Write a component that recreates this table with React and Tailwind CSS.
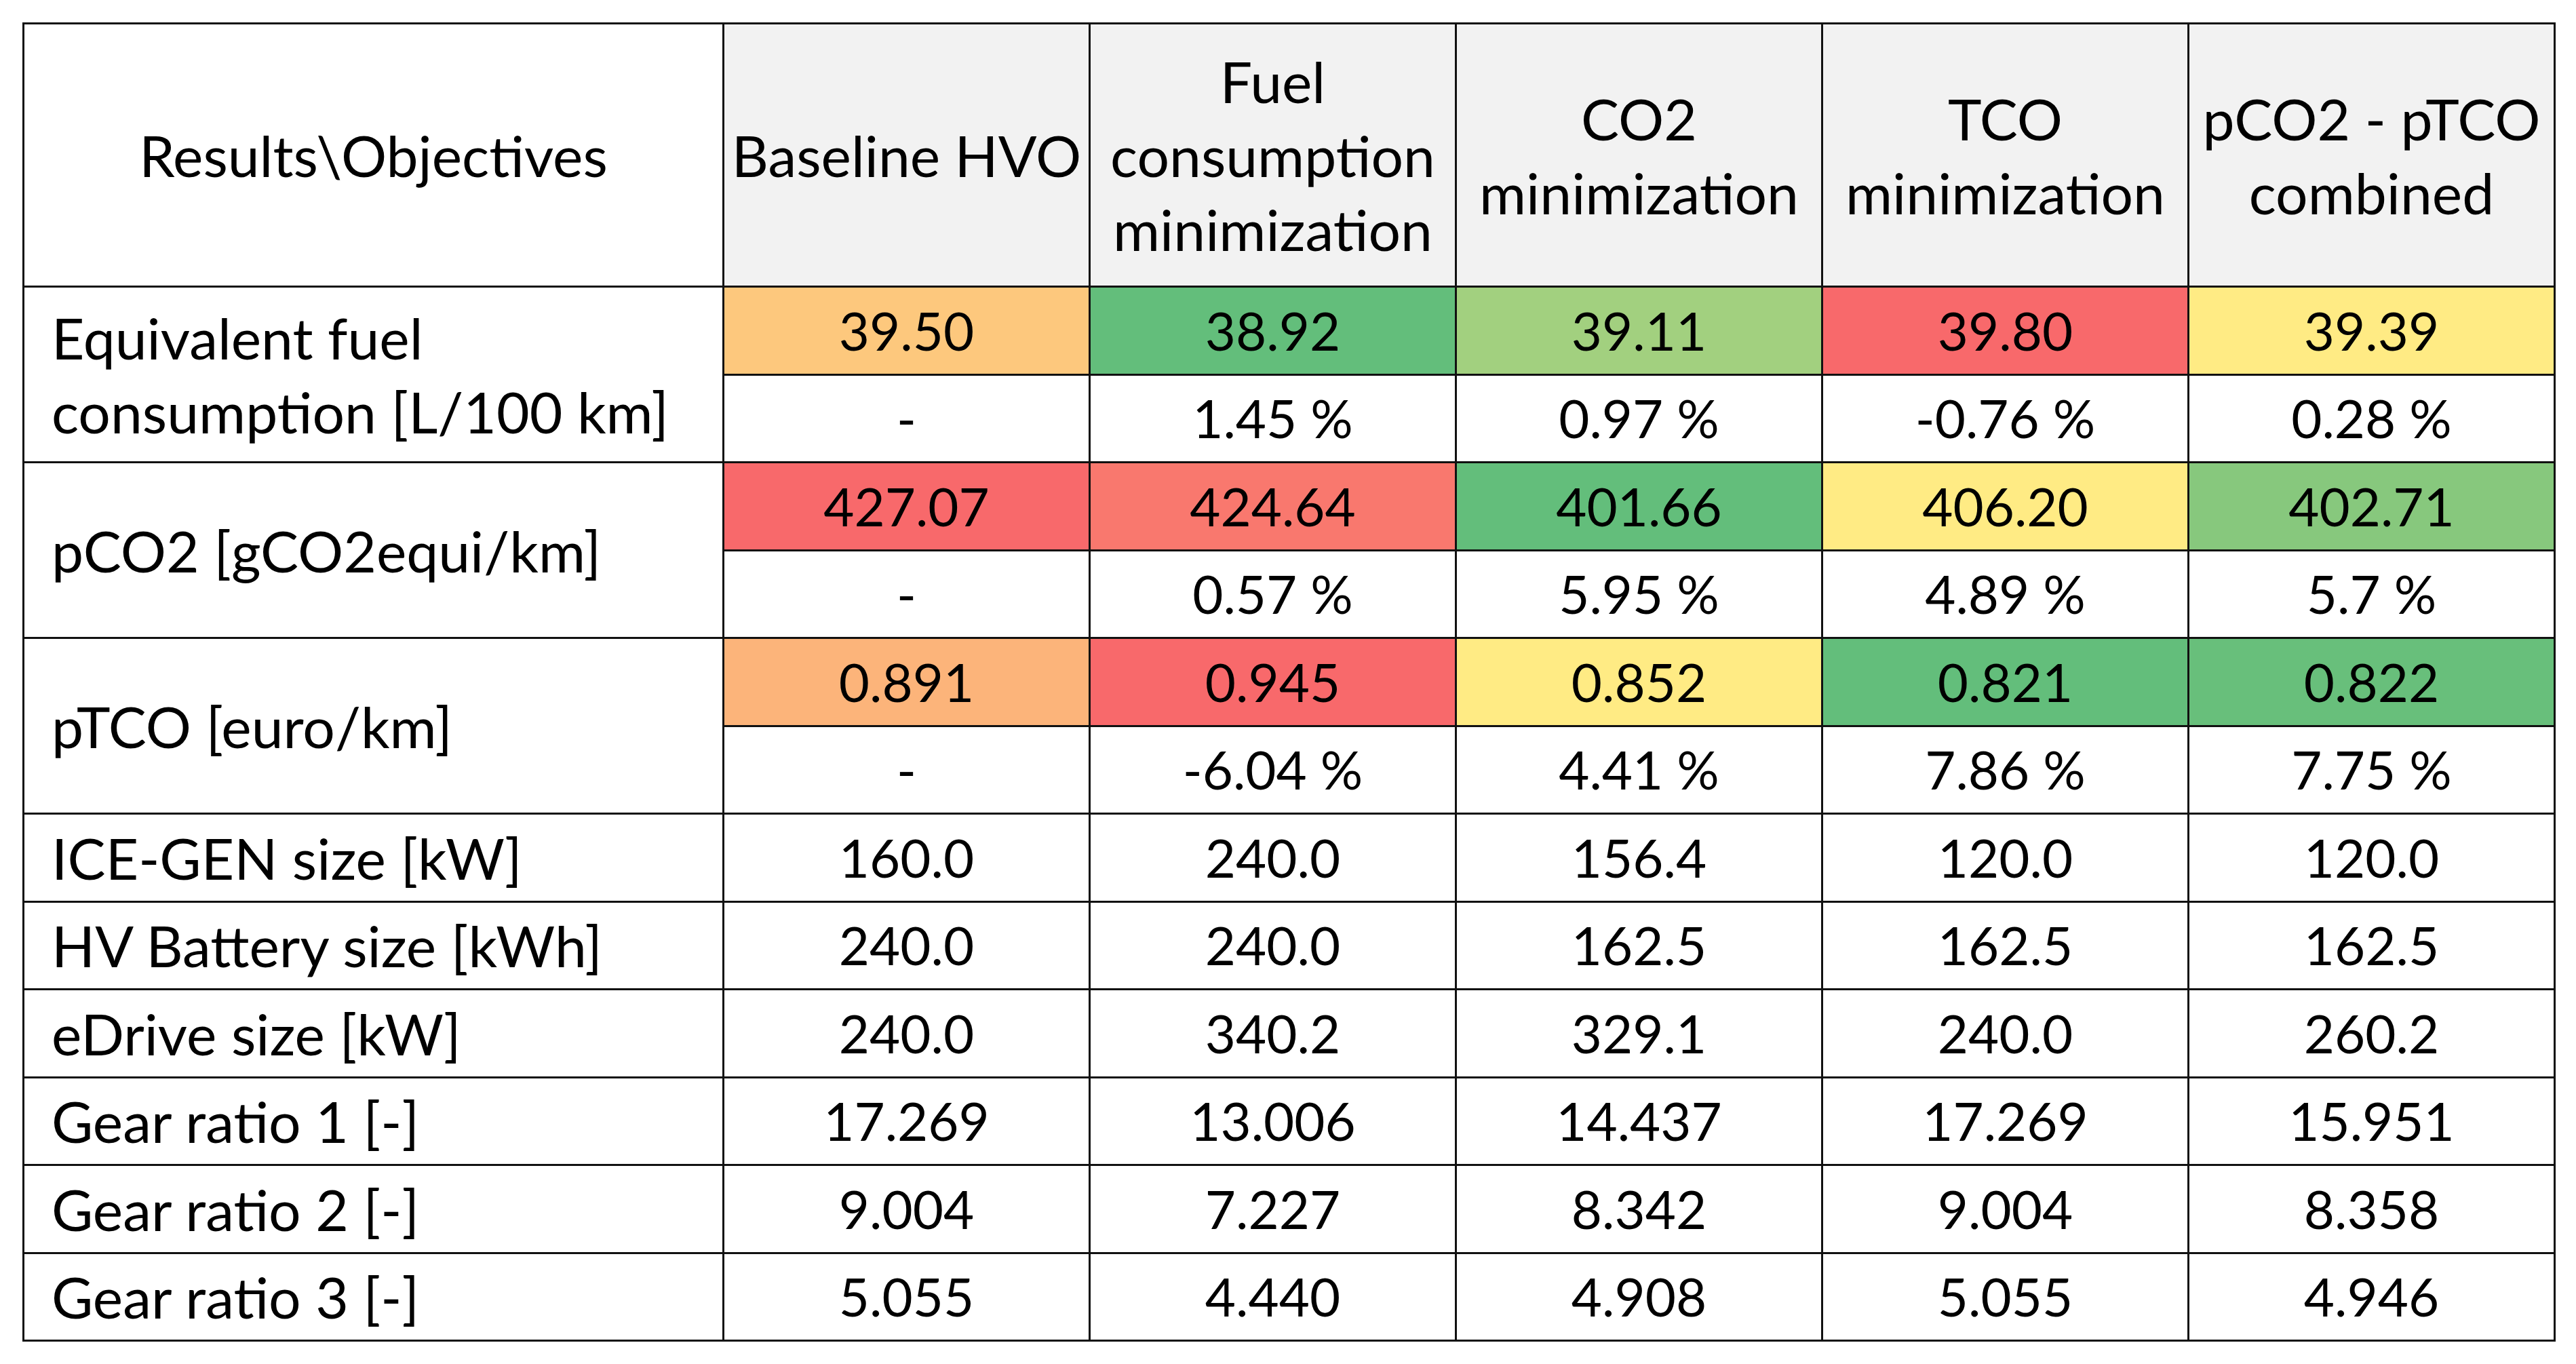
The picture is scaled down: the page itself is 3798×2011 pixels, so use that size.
const headers = [
  ["Baseline HVO"],
  ["Fuel", "consumption", "minimization"],
  ["CO2", "minimization"],
  ["TCO", "minimization"],
  ["pCO2 - pTCO", "combined"],
];

// objective rows: coloured value line + relative change line
const scored = [
  {
    label: ["Equivalent fuel", "consumption [L/100 km]"],
    values: [
      ["39.50", "bg-[#FDC87D]"],
      ["38.92", "bg-[#63BE7B]"],
      ["39.11", "bg-[#A2D07F]"],
      ["39.80", "bg-[#F8696B]"],
      ["39.39", "bg-[#FFEB84]"],
    ],
    change: ["-", "1.45 %", "0.97 %", "-0.76 %", "0.28 %"],
  },
  {
    label: ["pCO2 [gCO2equi/km]"],
    values: [
      ["427.07", "bg-[#F8696B]"],
      ["424.64", "bg-[#F9786E]"],
      ["401.66", "bg-[#63BE7B]"],
      ["406.20", "bg-[#FFEB84]"],
      ["402.71", "bg-[#87C87D]"],
    ],
    change: ["-", "0.57 %", "5.95 %", "4.89 %", "5.7 %"],
  },
  {
    label: ["pTCO [euro/km]"],
    values: [
      ["0.891", "bg-[#FCB47A]"],
      ["0.945", "bg-[#F8696B]"],
      ["0.852", "bg-[#FFEB84]"],
      ["0.821", "bg-[#63BE7B]"],
      ["0.822", "bg-[#68BF7B]"],
    ],
    change: ["-", "-6.04 %", "4.41 %", "7.86 %", "7.75 %"],
  },
];

const plain = [
  ["ICE-GEN size [kW]", "160.0", "240.0", "156.4", "120.0", "120.0"],
  ["HV Battery size [kWh]", "240.0", "240.0", "162.5", "162.5", "162.5"],
  ["eDrive size [kW]", "240.0", "340.2", "329.1", "240.0", "260.2"],
  ["Gear ratio 1 [-]", "17.269", "13.006", "14.437", "17.269", "15.951"],
  ["Gear ratio 2 [-]", "9.004", "7.227", "8.342", "9.004", "8.358"],
  ["Gear ratio 3 [-]", "5.055", "4.440", "4.908", "5.055", "4.946"],
];

function Cell({ className = "", children }) {
  return (
    <div className={`flex items-center justify-center text-center ${className}`}>
      {children}
    </div>
  );
}

function Value({ className = "", children }) {
  return <Cell className={`text-[78px] ${className}`}>{children}</Cell>;
}

function Label({ className = "", children }) {
  return <div className={`flex flex-col justify-center pl-[40px] bg-white ${className}`}>{children}</div>;
}

export default function App() {
  return (
    <div className="min-h-screen bg-white p-[33px] font-['Lato','Open_Sans',sans-serif] text-[84px] leading-[109px] text-black">
      <div className="grid w-max grid-cols-[1029px_repeat(5,537px)] grid-rows-[385px_repeat(12,126.5px)] gap-[3px] bg-[#111] p-[3px]">
        <Cell className="bg-white">Results\Objectives</Cell>
        {headers.map((lines, i) => (
          <Cell key={i} className="flex-col bg-[#F2F2F2]">
            {lines.map((l) => (
              <span key={l} className="block whitespace-nowrap">{l}</span>
            ))}
          </Cell>
        ))}

        {scored.map((row, r) => (
          <div key={r} className="contents">
            <Label className="row-span-2">
              {row.label.map((l) => (
                <span key={l} className="block whitespace-nowrap">{l}</span>
              ))}
            </Label>
            {row.values.map(([v, bg], i) => (
              <Value key={i} className={bg}>{v}</Value>
            ))}
            {row.change.map((v, i) => (
              <Value key={i} className="bg-white">{v}</Value>
            ))}
          </div>
        ))}

        {plain.map(([label, ...vals]) => (
          <div key={label} className="contents">
            <Label>
              <span className="whitespace-nowrap">{label}</span>
            </Label>
            {vals.map((v, i) => (
              <Value key={i} className="bg-white">{v}</Value>
            ))}
          </div>
        ))}
      </div>
    </div>
  );
}
